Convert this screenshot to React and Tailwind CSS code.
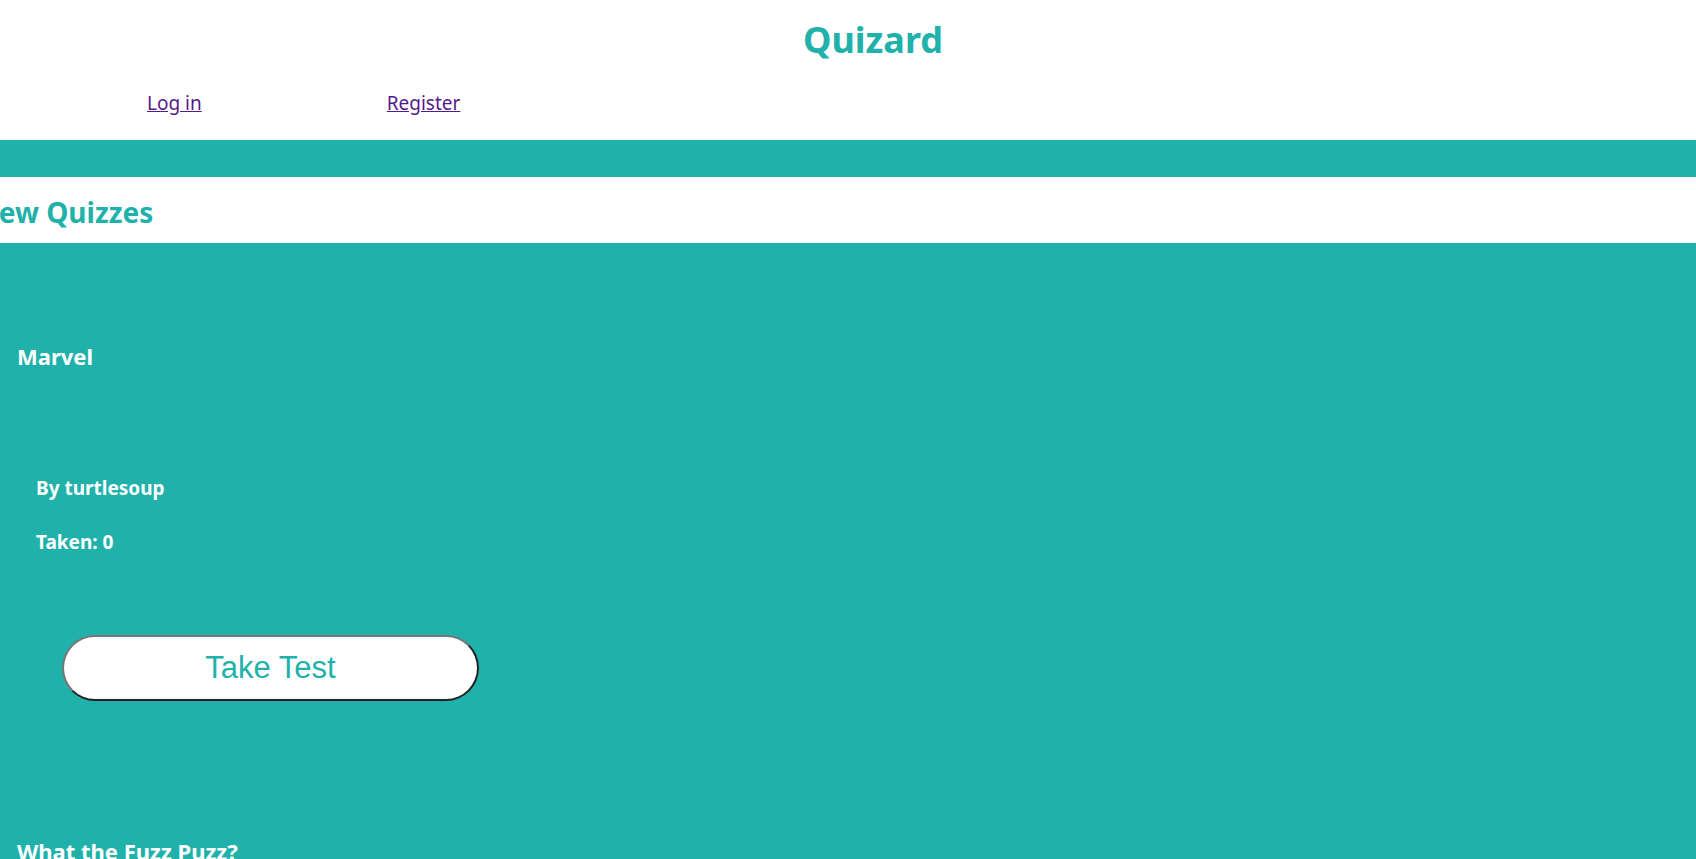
import React from 'react';

const quizzes = [
  { title: 'Marvel', author: 'turtlesoup', taken: 0 },
  { title: 'What the Fuzz Puzz?', author: 'turtlesoup', taken: 0 },
];

function QuizCard({ quiz }) {
  return (
    <div className="pl-[17px] pb-[37px]">
      <h3 className="text-[22px] font-bold text-white leading-none pt-[102px]">{quiz.title}</h3>
      <div className="pl-[19px] pt-[112px]">
        <p className="text-[19px] font-bold text-white leading-none">By {quiz.author}</p>
        <p className="text-[19px] font-bold text-white leading-none mt-[35px]">Taken: {quiz.taken}</p>
      </div>
      <button
        type="button"
        className="ml-[45px] mt-[83px] w-[417px] h-[66px] bg-white rounded-full border-2 border-t-[#767676] border-l-[#767676] border-r-[#222] border-b-[#222] text-[31px] text-[#20b2aa] font-['Liberation_Sans',Arial,sans-serif]"
      >
        Take Test
      </button>
    </div>
  );
}

export default function App() {
  return (
    <div className="min-h-screen bg-[#20b2aa] font-['Noto_Sans',sans-serif] overflow-hidden">
      <header className="bg-white h-[140px]">
        <h1 className="text-center text-[36px] font-bold text-[#20b2aa] pl-[50px] pt-[14px] leading-[52px]">Quizard</h1>
        <nav className="flex pt-[28px]">
          <a href="#" className="ml-[147px] text-[19px] leading-none text-[#551a8b] underline">Log in</a>
          <a href="#" className="ml-[185px] text-[19px] leading-none text-[#551a8b] underline">Register</a>
        </nav>
      </header>
      <main className="pt-[37px]">
        <div className="bg-white h-[66px] flex items-center overflow-hidden">
          <h2 className="-ml-[24px] mt-[3px] text-[28px] font-bold text-[#20b2aa] whitespace-nowrap">New Quizzes</h2>
        </div>
        {quizzes.map((q) => (
          <QuizCard key={q.title} quiz={q} />
        ))}
      </main>
    </div>
  );
}
